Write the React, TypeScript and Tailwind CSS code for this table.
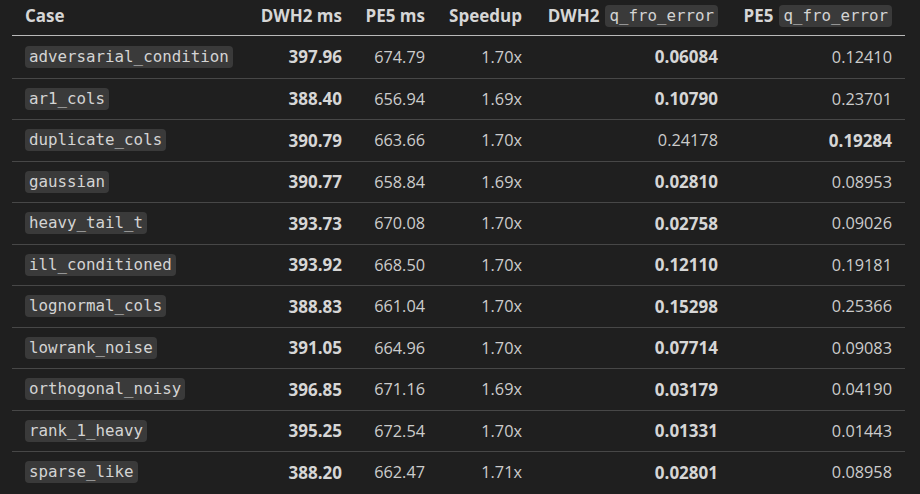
type Row = {
  name: string;
  dwhMs: string;
  peMs: string;
  speedup: string;
  dwhErr: string;
  peErr: string;
  peWins?: boolean;
};

const rows: Row[] = [
  { name: 'adversarial_condition', dwhMs: '397.96', peMs: '674.79', speedup: '1.70x', dwhErr: '0.06084', peErr: '0.12410' },
  { name: 'ar1_cols', dwhMs: '388.40', peMs: '656.94', speedup: '1.69x', dwhErr: '0.10790', peErr: '0.23701' },
  { name: 'duplicate_cols', dwhMs: '390.79', peMs: '663.66', speedup: '1.70x', dwhErr: '0.24178', peErr: '0.19284', peWins: true },
  { name: 'gaussian', dwhMs: '390.77', peMs: '658.84', speedup: '1.69x', dwhErr: '0.02810', peErr: '0.08953' },
  { name: 'heavy_tail_t', dwhMs: '393.73', peMs: '670.08', speedup: '1.70x', dwhErr: '0.02758', peErr: '0.09026' },
  { name: 'ill_conditioned', dwhMs: '393.92', peMs: '668.50', speedup: '1.70x', dwhErr: '0.12110', peErr: '0.19181' },
  { name: 'lognormal_cols', dwhMs: '388.83', peMs: '661.04', speedup: '1.70x', dwhErr: '0.15298', peErr: '0.25366' },
  { name: 'lowrank_noise', dwhMs: '391.05', peMs: '664.96', speedup: '1.70x', dwhErr: '0.07714', peErr: '0.09083' },
  { name: 'orthogonal_noisy', dwhMs: '396.85', peMs: '671.16', speedup: '1.69x', dwhErr: '0.03179', peErr: '0.04190' },
  { name: 'rank_1_heavy', dwhMs: '395.25', peMs: '672.54', speedup: '1.70x', dwhErr: '0.01331', peErr: '0.01443' },
  { name: 'sparse_like', dwhMs: '388.20', peMs: '662.47', speedup: '1.71x', dwhErr: '0.02801', peErr: '0.08958' },
];

const cols = 'grid grid-cols-[235px_108px_83px_97px_196px_174px]';
const bold = 'font-bold text-[17px] text-[#d6d6d6]';
const cell = 'flex items-center justify-end whitespace-nowrap px-[13px]';

const Code = ({ children }: { children: React.ReactNode }) => (
  <code className="inline-block h-[22px] rounded-[4px] bg-[#3a3a3a] px-[4px] font-['DejaVu_Sans_Mono',monospace] text-[15.8px] font-normal leading-[22px] text-[#d4d4d4]">
    {children}
  </code>
);

export default function App() {
  return (
    <div className="h-[494px] w-[920px] overflow-hidden bg-[#1f1f1f] font-['Open_Sans',sans-serif] text-[16.3px] text-[#cccccc]">
      <div className="ml-[12px] w-[893px]">
        <div className={`${cols} h-[36px] border-b border-[#b9b9b9] pb-[4px] ${bold}`}>
          <div className="flex items-center whitespace-nowrap px-[13px]">Case</div>
          <div className={cell}>DWH2 ms</div>
          <div className={cell}>PE5 ms</div>
          <div className={cell}>Speedup</div>
          <div className={`${cell} gap-[6px]`}>
            DWH2 <Code>q_fro_error</Code>
          </div>
          <div className={`${cell} gap-[6px]`}>
            PE5 <Code>q_fro_error</Code>
          </div>
        </div>
        {rows.map((r, i) => (
          <div
            key={r.name}
            className={`${cols} h-[41.5px] ${i > 0 ? 'border-t border-[#474747]' : ''}`}
          >
            <div className="flex items-center px-[13px]">
              <Code>{r.name}</Code>
            </div>
            <div className={`${cell} ${bold}`}>{r.dwhMs}</div>
            <div className={cell}>{r.peMs}</div>
            <div className={cell}>{r.speedup}</div>
            <div className={`${cell} ${r.peWins ? '' : bold}`}>{r.dwhErr}</div>
            <div className={`${cell} ${r.peWins ? bold : ''}`}>{r.peErr}</div>
          </div>
        ))}
      </div>
    </div>
  );
}
